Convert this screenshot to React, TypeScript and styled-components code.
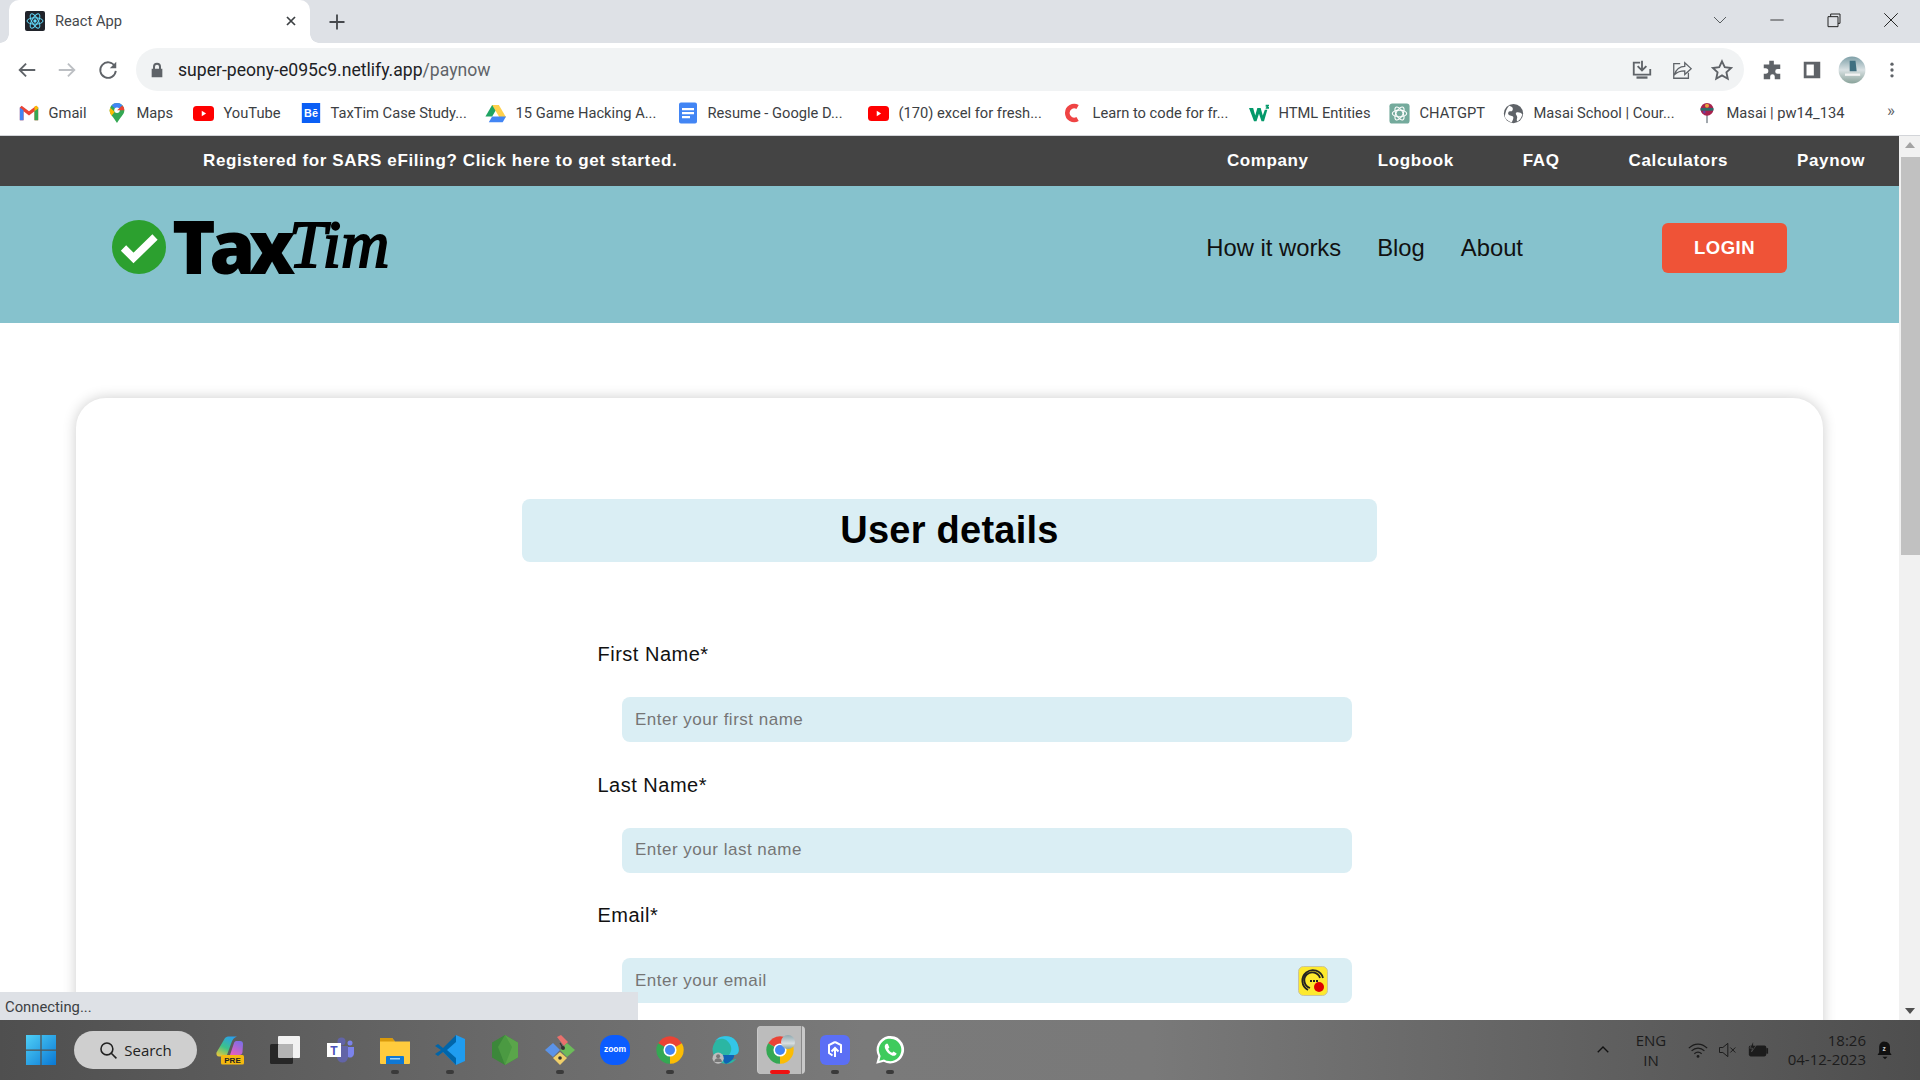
import React from "react";
import styled, { createGlobalStyle } from "styled-components";

const Global = createGlobalStyle`
  html, body { margin: 0; padding: 0; height: 100%; overflow: hidden; background: #fff; }
  #root { height: 100%; }
  * { box-sizing: border-box; }
`;

const Screen = styled.div`
  position: relative; width: 1920px; height: 1080px; display: flex; flex-direction: column; overflow: hidden;
  font-family: "Liberation Sans", Arial, sans-serif;
`;

/* browser chrome */
const TabStrip = styled.div`
  height: 43px; flex: none; background: #dee1e6; display: flex; align-items: flex-end; padding-left: 9px;
`;
const Tab = styled.div`
  position: relative; width: 301px; height: 43px; background: #fff; border-radius: 10px 10px 0 0;
  display: flex; align-items: center; padding: 0 11px 1px 16px; gap: 10px;
  font: 14.7px Roboto, sans-serif; color: #45484c;
  &::before, &::after { content: ""; position: absolute; bottom: 0; width: 9px; height: 9px; }
  &::before { left: -9px; background: radial-gradient(circle at 0 0, #dee1e6 8.5px, #fff 9px); }
  &::after { right: -9px; background: radial-gradient(circle at 100% 0, #dee1e6 8.5px, #fff 9px); }
`;
const TabTitle = styled.span`flex: 1;`;
const NewTab = styled.div`width: 36px; margin-left: 9px; height: 43px; display: flex; align-items: center; justify-content: center;`;
const WindowControls = styled.div`
  margin-left: auto; display: flex; align-items: center; height: 43px; padding-right: 1px;
`;
const WinBtn = styled.div<{ $w: number }>`width: ${p => p.$w}px; height: 43px; display: flex; align-items: center; justify-content: center; padding-bottom: 4px;`;

const Toolbar = styled.div`
  height: 48px; flex: none; background: #fff; display: flex; align-items: center; padding: 5px 0 0 7px;
`;
const NavBtn = styled.div<{ $w?: number }>`width: ${p => p.$w ?? 40}px; height: 40px; display: flex; align-items: center; justify-content: center;`;
const Omnibox = styled.div`
  width: 1608px; height: 43px; margin-left: 7px; margin-right: 8px; border-radius: 22px; background: #f1f3f4; display: flex; align-items: center; padding: 0 2px 0 13px;
`;
const Url = styled.div`font: 17.6px Roboto, sans-serif; color: #202124; margin-left: 13px; flex: 1;`;
const UrlPath = styled.span`color: #5f6368;`;

const Bookmarks = styled.div`
  height: 45px; flex: none; background: #fff; border-bottom: 1px solid #d3d5d9; display: flex; align-items: center; padding-left: 19px; position: relative;
`;
const Bookmark = styled.div<{ $w: number }>`
  width: ${p => p.$w}px; flex: none; display: flex; align-items: center; gap: 10.5px; white-space: nowrap;
  font: 14.7px Roboto, sans-serif; color: #3c4043;
`;
const BmIcon = styled.span`width: 19px; height: 20px; flex: none; display: flex; align-items: center; justify-content: center;`;
const More = styled.div`position: absolute; left: 1887px; top: 9px; font: 17px Roboto, sans-serif; color: #5f6368;`;

/* page */
const Viewport = styled.div`flex: 1; min-height: 0; display: flex;`;
const Page = styled.div`width: 1899px; flex: none; overflow: hidden; background: #fff;`;
const TopBar = styled.div`
  height: 50px; background: #444; color: #fff; display: flex; align-items: center; padding: 0 34px 0 203px;
  font-size: 17px; font-weight: 700; letter-spacing: 0.62px;
`;
const Promo = styled.div`flex: 1;`;
const TopLinks = styled.div`display: flex; gap: 69px;`;
const Header = styled.header`
  height: 137px; background: #86c2cd; display: flex; align-items: center; padding: 0 112px 13px;
`;
const Logo = styled.div`display: flex; align-items: center; flex: 1; color: #000; height: 60px; margin-top: -2px;`;
const LogoTax = styled.span`font: 800 74px/60px "Open Sans", sans-serif; letter-spacing: -6.5px; margin-left: 6px; margin-top: -2px;`;
const LogoTim = styled.span`font: italic 400 67px/60px "Liberation Serif", serif; -webkit-text-stroke: 2px #000; letter-spacing: 0; margin-left: 0; margin-top: -6px;`;
const MainNav = styled.nav`display: flex; gap: 36px; font-size: 23.8px; color: #111; margin-right: 139px;`;
const LoginButton = styled.button`
  width: 125px; height: 50px; border: 0; border-radius: 6px; background: #ef5337; color: #fff;
  font: 700 18.5px "Liberation Sans", sans-serif; letter-spacing: 0.5px;
`;
const Card = styled.section`
  margin: 75px 76px 0; height: 800px; border-radius: 30px; background: #fff; box-shadow: 0 0 14px rgba(0,0,0,0.2); padding-top: 101px;
`;
const Heading = styled.h1`
  margin: 0 auto; width: 855px; height: 63px; border-radius: 8px; background: #daeef4; color: #000;
  display: flex; align-items: center; justify-content: center; font-size: 38px; font-weight: 700; letter-spacing: 0.25px;
`;
const Form = styled.form`margin: 80px 0 0 521.5px; width: 754.5px;`;
const Field = styled.div`position: relative; height: 130.5px;`;
const Label = styled.label`display: block; height: 25px; line-height: 25px; font-size: 20px; letter-spacing: 0.5px; color: #111; margin-bottom: 30px;`;
const Input = styled.input`
  display: block; width: 730px; height: 45px; margin-left: 24.5px; border: 0; border-radius: 8px; background: #daeef4; padding: 0 13px;
  font: 17px "Liberation Sans", sans-serif; letter-spacing: 0.5px; color: #111; outline: none;
  &::placeholder { color: #757575; opacity: 1; }
`;
const FieldBadge = styled.span`position: absolute; right: 24px; top: 63px; width: 30px; height: 30px;`;

const Scrollbar = styled.div`width: 21px; flex: none; background: #f1f1f1; display: flex; flex-direction: column; align-items: center; justify-content: space-between; position: relative; padding: 6px 0;`;
const Thumb = styled.div`position: absolute; top: 21px; left: 2px; right: 0; height: 398px; background: #c1c1c1;`;
const Arrow = styled.div<{ $down?: boolean }>`
  width: 0; height: 0; border-left: 5px solid transparent; border-right: 5px solid transparent;
  ${p => p.$down ? "border-top: 6px solid #505050;" : "border-bottom: 6px solid #a3a3a3;"}
`;
const StatusBubble = styled.div`
  position: absolute; left: 0; bottom: 60px; width: 638px; height: 28px; background: #dee1e6; color: #3c4043;
  font: 14.8px Roboto, sans-serif; display: flex; align-items: center; padding: 1px 0 0 5px;
`;

/* taskbar */
const Taskbar = styled.footer`
  height: 60px; flex: none; display: flex; align-items: center; padding-left: 26px;
  background: linear-gradient(90deg, #4f4f4f 0%, #6b6b6b 28%, #7a7a7a 45%, #797979 60%, #5e5e5e 85%, #4e4e4e 100%);
`;
const SearchPill = styled.div`
  width: 123px; height: 38px; margin-left: 18px; border-radius: 19px; background: #cfcfcf; color: #222;
  display: flex; align-items: center; justify-content: center; gap: 6px; font: 15px "Open Sans", sans-serif;
`;
const Apps = styled.div`display: flex; margin-left: 5.5px;`;
const AppSlot = styled.div<{ $active?: boolean }>`
  position: relative; width: 55px; height: 60px; display: flex; align-items: center; justify-content: center;
  ${p => p.$active && `
    &::before { content: ""; position: absolute; left: 4px; top: 6px; width: 48px; height: 48px; background: #c9c9c9; border-radius: 4px; }
    &::after { content: ""; position: absolute; left: 5px; top: 6px; width: 43px; height: 48px; background: #bcbcbc; border-radius: 4px 0 0 4px; border-right: 1px solid #8a8a8a; }
  `}
`;
const AppIcon = styled.span`position: relative; z-index: 1; width: 30px; height: 30px; display: flex;`;
const AvatarBadge = styled.span`
  position: absolute; top: 0; right: 0; width: 14px; height: 14px; border-radius: 50%;
  background: linear-gradient(180deg, #8fa9b0, #d8dee0 60%, #8ea59d);
`;
const Dot = styled.span<{ $red?: boolean }>`
  position: absolute; z-index: 2; bottom: 6px; left: 50%; transform: translateX(-50%);
  width: ${p => p.$red ? 20 : 8}px; height: 4px; border-radius: 2px; background: ${p => p.$red ? "#e11" : "#3a3a3a"};
`;
const Tray = styled.div`
  margin-left: auto; display: flex; align-items: center; color: #1c1c1c; font: 15px "Open Sans", sans-serif; padding-right: 25px;
`;
const Lang = styled.div`width: 40px; text-align: center; line-height: 20px; margin-left: 19px;`;
const TrayIcon = styled.span<{ $ml: number }>`margin-left: ${p => p.$ml}px; display: flex;`;
const Clock = styled.div`width: 82px; margin-left: 15px; text-align: right; line-height: 19px; white-space: nowrap;`;

/* icons */
const Ic = ({ s = 20, children, vb = "0 0 24 24" }: { s?: number; vb?: string; children: React.ReactNode }) => (
  <svg width={s} height={s} viewBox={vb} style={{ display: "block", flex: "none" }}>{children}</svg>
);
const Chrome = () => (
  <Ic s={30} vb="0 0 48 48">
    <path d="M24 24 5 13A22 22 0 0 1 43 13Z" fill="#ea4335" />
    <path d="M24 24 43 13A22 22 0 0 1 24 46Z" fill="#fbbc04" />
    <path d="M24 24 24 46A22 22 0 0 1 5 13Z" fill="#34a853" />
    <circle cx="24" cy="24" r="10.5" fill="#fff" /><circle cx="24" cy="24" r="8" fill="#4285f4" />
  </Ic>
);
const Youtube = () => (
  <Ic s={21}><rect x="0" y="3.500" width="24" height="17" rx="4" fill="#f00" /><path d="M10 8.800v6.400l5-3.200z" fill="#fff" /></Ic>
);
const ReactIcon = () => (
  <svg width="20" height="20" viewBox="0 0 20 20" style={{ display: "block", flex: "none" }}>
    <rect width="20" height="20" rx="2" fill="#20232a" />
    <g fill="none" stroke="#61dafb" strokeWidth="1">
      <ellipse cx="10" cy="10" rx="8" ry="3.2" />
      <ellipse cx="10" cy="10" rx="8" ry="3.2" transform="rotate(60 10 10)" />
      <ellipse cx="10" cy="10" rx="8" ry="3.2" transform="rotate(120 10 10)" />
    </g>
    <circle cx="10" cy="10" r="1.7" fill="#61dafb" />
  </svg>
);

const bookmarks: { w: number; t: string; i: React.ReactNode }[] = [
  { w: 88, t: "Gmail", i: <Ic s={22}><path d="M2 6v14h4V10l6 4.600L18 10v10h4V6l-2-2-8 6-8-6z" fill="#ea4335" /><path d="M2 6v14h4V9z" fill="#4285f4" /><path d="M22 6v14h-4V9z" fill="#34a853" /><path d="M18 10V5l2-1 2 2v1z" fill="#fbbc04" /></Ic> },
  { w: 87, t: "Maps", i: <Ic s={22}><path d="M12 1a8 8 0 0 0-8 8c0 5 5 8 8 14 3-6 8-9 8-14a8 8 0 0 0-8-8z" fill="#34a853" /><path d="M12 1a8 8 0 0 0-6 2.700L12 9l6-5.300A8 8 0 0 0 12 1z" fill="#4285f4" /><path d="M4.500 6 9.500 11 6 15c-1-1.600-2-3.500-2-6z" fill="#fbbc04" /><circle cx="12" cy="9" r="3" fill="#fff" /><path d="M18 3.700 12 9 20 9a8 8 0 0 0-2-5.300z" fill="#ea4335" /></Ic> },
  { w: 107, t: "YouTube", i: <Youtube /> },
  { w: 185, t: "TaxTim Case Study...", i: <Ic s={20}><rect x="1" y="0" width="22" height="24" fill="#0b5ff5" /><text x="12" y="17" textAnchor="middle" fontFamily="Liberation Sans" fontWeight="700" fontSize="13" fill="#fff">Bē</text></Ic> },
  { w: 192, t: "15 Game Hacking A...", i: <Ic s={23}><path d="M8.500 3h7l-7 12H1.500z" fill="#1fa463" /><path d="M15.500 3 23 16h-7L8.500 3z" fill="#ffd04b" /><path d="M5 21 8.500 15H23l-3.500 6z" fill="#4285f4" /></Ic> },
  { w: 191, t: "Resume - Google D...", i: <Ic s={24}><path d="M5 1.500h14a2 2 0 0 1 2 2v17a2 2 0 0 1-2 2H5a2 2 0 0 1-2-2v-17a2 2 0 0 1 2-2z" fill="#4285f4" /><path d="M6 7h12v2.200H6zM6 11h12v2.200H6zM6 15h8v2.200H6z" fill="#fff" /></Ic> },
  { w: 194, t: "(170) excel for fresh...", i: <Youtube /> },
  { w: 186, t: "Learn to code for fr...", i: <Ic s={22}><path d="M17 5.500A7.500 7.500 0 1 0 17 18.500" fill="none" stroke="#ef4444" strokeWidth="5" /></Ic> },
  { w: 141, t: "HTML Entities", i: <Ic s={20}><path d="M0 6h5l2.500 9L10 6h4l2.500 9L19 8h3l-4 14h-3l-3-9-3 9H6z" fill="#04996a" /><path d="M20 2h4v1.500l-1.500 1.300H24V7h-4V5.800l1.500-1.300H20z" fill="#04996a" /></Ic> },
  { w: 114, t: "CHATGPT", i: <Ic s={23}><rect x="1.500" y="1.500" width="21" height="21" rx="3" fill="#74aa9c" /><g fill="none" stroke="#fff" strokeWidth="1.100"><ellipse cx="12" cy="12" rx="7.500" ry="3.500" /><ellipse cx="12" cy="12" rx="7.500" ry="3.500" transform="rotate(60 12 12)" /><ellipse cx="12" cy="12" rx="7.500" ry="3.500" transform="rotate(120 12 12)" /></g></Ic> },
  { w: 193, t: "Masai School | Cour...", i: <Ic s={21}><circle cx="12" cy="12" r="11" fill="#5f6368" /><path d="M7 3c3 1 5 2 4 5S7 8 6 11s3 3 5 4 0 5-1 7c-3-1-7-3-8-7 1-5 2-9 5-12zM15 11c2-1 6 0 7 2-1 4-3 7-6 8-1-3 1-4 0-6s-2-3-1-4z" fill="#fff" /></Ic> },
  { w: 180, t: "Masai | pw14_134", i: <Ic s={22}><rect x="11" y="14" width="2" height="9" fill="#9aa0a6" /><circle cx="12" cy="8" r="7" fill="#a8234f" /><path d="M5 6.500h14v3H5z" fill="#2c6d6a" /><circle cx="12" cy="4" r="2.200" fill="#e8a33d" /><circle cx="9" cy="11" r="1.500" fill="#6b3fa0" /></Ic> },
];

const taskApps: { dot?: boolean; active?: boolean; i: React.ReactNode }[] = [
  { i: <Ic s={30} vb="0 0 30 30">
      <defs>
        <linearGradient id="cp" x1="0.700" y1="0" x2="0.200" y2="1"><stop offset="0" stopColor="#2b9fe8" /><stop offset="0.55" stopColor="#3cc28a" /><stop offset="1" stopColor="#e4c83c" /></linearGradient>
        <linearGradient id="cq" x1="0.800" y1="0" x2="0.300" y2="1"><stop offset="0" stopColor="#7a6fe8" /><stop offset="1" stopColor="#e35fc0" /></linearGradient>
      </defs>
      <path d="M10 3c1-1 2-1.500 3-1.500h9c-3 1-4.500 3-5.500 6L12 20c-.5 1-1.500 1.500-3 1.500H4c-2 0-3-2-2.500-4z" fill="url(#cp)" />
      <path d="M19 8c.5-1.500 1.500-2 3-2h3c2 0 3 1 3 3l-.5 8c0 2-1.500 3-3 3H15z" fill="url(#cq)" />
      <rect x="6" y="20" width="23" height="9.500" rx="1.500" fill="#f5b90f" />
      <text x="17.500" y="27.800" textAnchor="middle" fontFamily="Liberation Sans" fontWeight="700" fontSize="8" fill="#222">PRE</text>
    </Ic> },
  { i: <Ic s={30} vb="0 0 30 30"><rect x="8" y="1" width="22" height="22" rx="1" fill="#f2f2f2" /><rect x="0" y="9" width="23" height="20" rx="1.500" fill="#272727" /><rect x="8" y="9" width="15" height="14" rx="1" fill="#b4b4b4" /></Ic> },
  { i: <Ic s={30} vb="0 0 30 30"><circle cx="16.500" cy="6.500" r="4" fill="#6264a7" /><circle cx="25" cy="8" r="2.500" fill="#7b83eb" /><path d="M22 12h7v7a4 4 0 0 1-6 3z" fill="#7b83eb" /><path d="M12 11h11v11a5.500 5.500 0 0 1-11 0z" fill="#6264a7" /><rect x="2" y="8" width="14" height="14" fill="#fff" /><text x="9" y="19.500" textAnchor="middle" fontFamily="Liberation Sans" fontWeight="700" fontSize="12" fill="#4b53bc">T</text></Ic> },
  { dot: true, i: <Ic s={30} vb="0 0 30 30"><path d="M0 3h12l3 3.500h15V28a1 1 0 0 1-1 1H1a1 1 0 0 1-1-1z" fill="#ffcb3d" /><path d="M0 3h12l3 3.500H0z" fill="#d99a0b" /><path d="M7 21h16a1 1 0 0 1 1 1v7H6v-7a1 1 0 0 1 1-1z" fill="#0f78d4" /><rect x="10" y="23" width="10" height="1.500" fill="#9fd3f7" /></Ic> },
  { dot: true, i: <Ic s={30} vb="0 0 30 30"><path d="M21 0 30 4v22l-9 4L8 17z" fill="#1f9cf0" /><path d="M21 0 8 13 3 9 0 11l6 4-6 4 3 2 5-4 13 13v-7L12 15l9-8z" fill="#0065a9" /></Ic> },
  { i: <Ic s={30} vb="0 0 30 30"><path d="M15 0 28 7.500v15L15 30 2 22.500v-15z" fill="#3c873a" /><path d="M15 0 28 7.500v15L15 30z" fill="#5aa54a" /><path d="M15 0 8 12l7 18 7-18z" fill="#4b9a42" /></Ic> },
  { dot: true, i: <Ic s={30} vb="0 0 30 30"><path d="M12 2l4-2 7 7-4 4z" fill="#e8716d" /><path d="M8 8l7 7-7 7-8-7z" fill="#5b93e8" /><path d="M22 8l8 7-8 7-7-7z" fill="#6cbb5a" /><path d="M15 17l7 6-7 7-7-7z" fill="#efcf6a" /><circle cx="15" cy="23" r="1.800" fill="#333" /><circle cx="18" cy="13" r="2" fill="#333" /><path d="M15 8l3 5" stroke="#333" strokeWidth="1.200" /></Ic> },
  { i: <Ic s={30} vb="0 0 30 30"><rect x="0" y="0" width="30" height="30" rx="13" fill="#0b5cff" /><text x="15" y="17" textAnchor="middle" fontFamily="Liberation Sans" fontSize="8.500" fontWeight="700" fill="#fff">zoom</text></Ic> },
  { dot: true, i: <Chrome /> },
  { i: <Ic s={30}><path d="M2 11C3 5 7 1 13 1c6 0 10 5 10 11 0 2-1 4-4 4H10c0 3 4 5 8 4 1 0 2-1 3-1-2 3-5 4-8 4-6 0-11-5-11-12z" fill="#2bb6a3" /><path d="M13 1c6 0 10 5 10 11 0 2-1 4-4 4h-4c3-3 3-8-2-12-3-2-7-1-9 1 2-3 5-4 9-4z" fill="#34c6e8" /><path d="M10 16h9c1 1-1 5-6 7-2 0-3-4-3-7z" fill="#0f63b5" /><circle cx="6.500" cy="18.500" r="4.500" fill="#bdbdbd" /><circle cx="6.500" cy="17" r="1.600" fill="#777" /><path d="M3.500 21.500a3 3 0 0 1 6 0z" fill="#777" /></Ic> },
  { active: true, i: <><Chrome /><AvatarBadge /></> },
  { dot: true, i: <Ic s={30} vb="0 0 30 30"><rect x="0" y="0" width="30" height="30" rx="6" fill="#5b6ff5" /><path d="M15 7l6 3v8M15 7 9 10v8l3.500 2.500M15 22v-9M11.500 16.500l3.500-3.500 3.500 3.500" fill="none" stroke="#fff" strokeWidth="2" /></Ic> },
  { dot: true, i: <Ic s={30}><path d="M1 23l1.600-6A11 11 0 1 1 7 21.400z" fill="#fff" /><path d="M3.500 20.500l1-3.700A9 9 0 1 1 7.200 19.500z" fill="#3fcb5d" /><path d="M9 7c-1 .5-1.500 2-1 3.500 1 3 3.500 5 6 6 1.500.3 3-.3 3.300-1.800l-2.500-1.500-1 1c-1.500-.6-2.800-2-3.300-3.300l1-1L10.200 7z" fill="#fff" /></Ic> },
];

const fields = [
  { l: "First Name*", p: "Enter your first name" },
  { l: "Last Name*", p: "Enter your last name" },
  { l: "Email*", p: "Enter your email", badge: true },
];

export default function App() {
  return (
    <Screen>
      <Global />
      <TabStrip>
        <Tab>
          <ReactIcon />
          <TabTitle>React App</TabTitle>
          <Ic s={16}><path d="M6 6l12 12M18 6 6 18" stroke="#3c4043" strokeWidth="2.600" fill="none" /></Ic>
        </Tab>
        <NewTab><Ic s={20}><path d="M12 3v18M3 12h18" stroke="#45484c" strokeWidth="2.200" fill="none" /></Ic></NewTab>
        <WindowControls>
          <WinBtn $w={57}><Ic s={18}><path d="M4 8l8 8 8-8" stroke="#3c4043" strokeWidth="1.100" fill="none" /></Ic></WinBtn>
          <WinBtn $w={57}><Ic s={16}><path d="M2 12h20" stroke="#222" strokeWidth="1.300" fill="none" /></Ic></WinBtn>
          <WinBtn $w={57}><Ic s={16}><path d="M3 7h15v15H3zM7 7V3h14v14h-3" stroke="#222" strokeWidth="1.500" fill="none" /></Ic></WinBtn>
          <WinBtn $w={57}><Ic s={18}><path d="M3 3l18 18M21 3 3 21" stroke="#222" strokeWidth="1.300" fill="none" /></Ic></WinBtn>
        </WindowControls>
      </TabStrip>

      <Toolbar>
        <NavBtn><Ic s={22}><path d="M21 12H4M11 5l-7 7 7 7" stroke="#5f6368" strokeWidth="2" fill="none" /></Ic></NavBtn>
        <NavBtn><Ic s={22}><path d="M3 12h17M13 5l7 7-7 7" stroke="#bcbfc3" strokeWidth="2" fill="none" /></Ic></NavBtn>
        <NavBtn $w={42}><Ic s={22}><path d="M19.500 8A8.500 8.500 0 1 0 20.500 13" stroke="#5f6368" strokeWidth="2" fill="none" /><path d="M21 3v7h-7z" fill="#5f6368" /></Ic></NavBtn>
        <Omnibox>
          <Ic s={16}><path d="M6 10V7a6 6 0 0 1 12 0v3h2v13H4V10zm3 0h6V7a3 3 0 0 0-6 0z" fill="#5f6368" /></Ic>
          <Url>super-peony-e095c9.netlify.app<UrlPath>/paynow</UrlPath></Url>
          <NavBtn><Ic s={22}><path d="M4 3h6v2H4v11h16v-5h2v7H2V3zM13 2v8l3-3 1.500 1.500L12 14 6.500 8.500 8 7l3 3V2z" fill="#5f6368" /><path d="M6 19h12v2.500H6z" fill="#5f6368" /></Ic></NavBtn>
          <NavBtn><Ic s={22}><path d="M10 5H3v16h16v-6M4 17c1-6 6-9 11-9V4l7 6.500L15 17v-4c-4 0-8 1-11 4z" stroke="#5f6368" strokeWidth="1.400" fill="none" /></Ic></NavBtn>
          <NavBtn><Ic s={22}><path d="M12 2.500l3 6.500 7 .8-5.200 4.700 1.500 7L12 17.900 5.700 21.500l1.500-7L2 9.800 9 9z" stroke="#5f6368" strokeWidth="2" fill="none" /></Ic></NavBtn>
        </Omnibox>
        <NavBtn><Ic s={22}><path d="M9 2h5v4h7v5h-3a2.500 2.500 0 0 0 0 5h3v6h-6v-3a2.500 2.500 0 0 0-5 0v3H3v-6h2a3 3 0 0 0 0-6H3V6h6z" fill="#5f6368" /></Ic></NavBtn>
        <NavBtn><Ic s={22}><path d="M3 3h18v18H3zM6 6v12h8V6z" fill="#5f6368" fillRule="evenodd" /></Ic></NavBtn>
        <NavBtn><Ic s={28}><defs><linearGradient id="av" x1="0" y1="0" x2="0" y2="1"><stop offset="0" stopColor="#7fa0a8" /><stop offset="0.5" stopColor="#d9e1e3" /><stop offset="1" stopColor="#8aa39b" /></linearGradient></defs><circle cx="12" cy="12" r="11.500" fill="url(#av)" /><path d="M10 4h5l1 9h-6z" fill="#3f6f80" /><path d="M6 15h13v2H6z" fill="#f3f3f3" /></Ic></NavBtn>
        <NavBtn><Ic s={20}><circle cx="12" cy="5" r="2" fill="#5f6368" /><circle cx="12" cy="12" r="2" fill="#5f6368" /><circle cx="12" cy="19" r="2" fill="#5f6368" /></Ic></NavBtn>
      </Toolbar>

      <Bookmarks>
        {bookmarks.map(b => (
          <Bookmark key={b.t} $w={b.w}><BmIcon>{b.i}</BmIcon>{b.t}</Bookmark>
        ))}
        <More>»</More>
      </Bookmarks>

      <Viewport>
        <Page>
          <TopBar>
            <Promo>Registered for SARS eFiling? Click here to get started.</Promo>
            <TopLinks>
              <span>Company</span><span>Logbook</span><span>FAQ</span><span>Calculators</span><span>Paynow</span>
            </TopLinks>
          </TopBar>
          <Header>
            <Logo>
              <svg width="54" height="54" viewBox="0 0 54 54" style={{ display: "block", flex: "none" }}>
                <circle cx="27" cy="27" r="27" fill="#2ca02f" />
                <path d="M11.500 28 21.500 38 43 17" fill="none" stroke="#fff" strokeWidth="7.500" />
              </svg>
              <LogoTax>Tax</LogoTax><LogoTim>Tim</LogoTim>
            </Logo>
            <MainNav><span>How it works</span><span>Blog</span><span>About</span></MainNav>
            <LoginButton>LOGIN</LoginButton>
          </Header>
          <Card>
            <Heading>User details</Heading>
            <Form>
              {fields.map(f => (
                <Field key={f.l}>
                  <Label>{f.l}</Label>
                  <Input placeholder={f.p} />
                  {f.badge && (
                    <FieldBadge>
                      <svg width="30" height="30" viewBox="0 0 30 30" style={{ display: "block" }}>
                        <rect x="0.500" y="0.500" width="29" height="29" rx="5" fill="#fde92e" stroke="#c9c4a0" />
                        <path d="M10 24A10.500 10.500 0 1 1 25 12M12 22A8 8 0 1 1 22 12" fill="none" stroke="#222" strokeWidth="1.800" />
                        <path d="M12 15h2M15 15h2M18 15h2" stroke="#222" strokeWidth="2" />
                        <circle cx="21" cy="21" r="5" fill="#dd0000" />
                      </svg>
                    </FieldBadge>
                  )}
                </Field>
              ))}
            </Form>
          </Card>
        </Page>
        <Scrollbar><Thumb /><Arrow /><Arrow $down /></Scrollbar>
      </Viewport>
      <StatusBubble>Connecting...</StatusBubble>

      <Taskbar>
        <Ic s={30}>
          <defs><linearGradient id="win" x1="0" y1="0" x2="1" y2="1"><stop offset="0" stopColor="#4fd0f7" /><stop offset="1" stopColor="#0a78d4" /></linearGradient></defs>
          <path d="M0 0h11.500v11.500H0zM12.500 0H24v11.500H12.500zM0 12.500h11.500V24H0zM12.500 12.500H24V24H12.500z" fill="url(#win)" />
        </Ic>
        <SearchPill>
          <Ic s={19}><circle cx="10" cy="10" r="7.500" stroke="#222" strokeWidth="2" fill="none" /><path d="M15.500 15.500 22 22" stroke="#222" strokeWidth="2" /></Ic>
          Search
        </SearchPill>
        <Apps>
          {taskApps.map((a, i) => (
            <AppSlot key={i} $active={a.active}>
              <AppIcon>{a.i}</AppIcon>
              {a.dot && <Dot />}
              {a.active && <Dot $red />}
            </AppSlot>
          ))}
        </Apps>
        <Tray>
          <Ic s={18}><path d="M5 15l7-7 7 7" stroke="#111" strokeWidth="1.800" fill="none" /></Ic>
          <Lang>ENG<br />IN</Lang>
          <TrayIcon $ml={16}><Ic s={22}><path d="M2 10c6-6 14-6 20 0M5 13c4-4 10-4 14 0M8 16c2.500-2 5.500-2 8 0" stroke="#1c1c1c" strokeWidth="1.300" fill="none" /><circle cx="12" cy="19" r="1.500" fill="#1c1c1c" /></Ic></TrayIcon>
          <TrayIcon $ml={8}><Ic s={20}><path d="M3 9h4l6-5v16l-6-5H3zM16 9l6 6M22 9l-6 6" stroke="#1c1c1c" strokeWidth="1.200" fill="none" /></Ic></TrayIcon>
          <TrayIcon $ml={10}><Ic s={22}><rect x="2" y="7" width="19" height="12" rx="2" fill="#1c1c1c" /><rect x="21" y="10" width="2" height="6" fill="#1c1c1c" /><path d="M7 2 3 10h3l-1 4 5-7H7z" fill="#1c1c1c" stroke="#666" strokeWidth="0.600" /></Ic></TrayIcon>
          <Clock>18:26<br />04-12-2023</Clock>
          <TrayIcon $ml={9}><Ic s={20}><path d="M12 2a6 6 0 0 1 6 6v7l2 3H3l2-3V8a6 6 0 0 1 7-6zM9 20h6l-3 3z" fill="#111" /><text x="11" y="13" textAnchor="middle" fontFamily="Liberation Sans" fontWeight="700" fontSize="8" fill="#ccc">z</text></Ic></TrayIcon>
        </Tray>
      </Taskbar>
    </Screen>
  );
}
